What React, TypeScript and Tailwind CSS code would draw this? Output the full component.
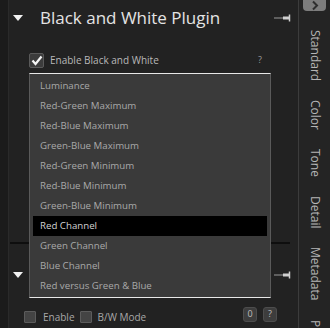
import React from 'react';

const items = [
  'Luminance',
  'Red-Green Maximum',
  'Red-Blue Maximum',
  'Green-Blue Maximum',
  'Red-Green Minimum',
  'Red-Blue Minimum',
  'Green-Blue Minimum',
  'Red Channel',
  'Green Channel',
  'Blue Channel',
  'Red versus Green & Blue',
];

const tabs = ['Standard', 'Color', 'Tone', 'Detail', 'Metadata', 'Presets'];

function Triangle() {
  return (
    <svg width="10" height="6" viewBox="0 0 10 6">
      <path d="M0 0 H10 L5 6 Z" fill="#f2f2f2" />
    </svg>
  );
}

function Pin() {
  return (
    <svg width="18" height="8" viewBox="0 0 18 8">
      <path d="M0 4 H9" stroke="#9a9a9a" strokeWidth="1" />
      <path d="M9 2.5 H15 V5.5 H9 Z" fill="#cfcfcf" />
      <path d="M15.5 0.5 V7.5" stroke="#cfcfcf" strokeWidth="1.5" />
    </svg>
  );
}

function Checkbox({ checked }: { checked?: boolean }) {
  return (
    <div
      className={
        checked
          ? 'shrink-0 w-[15px] h-[15px] rounded-[2px] border border-[#5a5a5a] bg-[#3c3c3c] flex items-center justify-center'
          : 'shrink-0 w-[12px] h-[12px] rounded-[1px] border border-[#5c5c5c] bg-[#444444]'
      }
    >
      {checked && (
        <svg width="12" height="11" viewBox="0 0 12 11">
          <path d="M1.5 5.5 L4.5 9 L10.5 1.5" stroke="#f4f4f4" strokeWidth="2.2" fill="none" />
        </svg>
      )}
    </div>
  );
}

export default function App() {
  return (
    <div
      className="w-[330px] h-[328px] flex bg-[#222222] overflow-hidden"
      style={{ fontFamily: '"Open Sans", "Noto Sans", sans-serif' }}
    >
      <div className="shrink-0 w-[9px] h-full bg-[#1b1b1b] border-r border-[#2a2a2a]" />

      <div className="relative w-[289px] shrink-0 flex flex-col">
        {/* header */}
        <div className="h-[35px] flex items-center pl-[4px] pr-[6px]">
          <Triangle />
          <span className="ml-[17px] text-[17px] leading-none text-[#e4e4e4]">
            Black and White Plugin
          </span>
          <div className="ml-auto">
            <Pin />
          </div>
        </div>

        {/* enable row */}
        <div className="mt-[17px] h-[16px] flex items-center pl-[20px] pr-[36px]">
          <Checkbox checked />
          <span className="ml-[6px] text-[10px] text-[#b8b8b8]">Enable Black and White</span>
          <span className="ml-auto text-[9px] text-[#9a9a9a]">?</span>
        </div>

        <div className="h-[176px] flex flex-col justify-end">
          <div className="h-[2px] bg-[#0e0e0e] mx-[1px] mr-[8px]" />
        </div>

        {/* second section header */}
        <div className="h-[62px] flex items-center pl-[4px] pr-[6px]">
          <Triangle />
          <div className="ml-auto">
            <Pin />
          </div>
        </div>

        {/* bottom row */}
        <div className="h-[22px] flex items-center pl-[15px] pr-[21px]">
          <Checkbox />
          <span className="ml-[7px] text-[10px] text-[#a8a8a8]">Enable</span>
          <div className="ml-[5px]">
            <Checkbox />
          </div>
          <span className="ml-[6px] text-[10px] text-[#a8a8a8]">B/W Mode</span>
          <div className="ml-auto flex gap-[6px] -mt-[6px]">
            <div className="w-[14px] h-[15px] rounded-[3px] bg-[#3d3d3d] border border-[#4d4d4d] flex items-center justify-center text-[9px] text-[#bdbdbd]">
              0
            </div>
            <div className="w-[14px] h-[15px] rounded-[3px] bg-[#3d3d3d] border border-[#4d4d4d] flex items-center justify-center text-[9px] text-[#bdbdbd]">
              ?
            </div>
          </div>
        </div>

        {/* open dropdown */}
        <div className="absolute left-[20px] top-[73px] w-[242px] h-[225px] bg-[#3a3a3a] border-t border-b border-t-[#e8e8e8] border-b-[#e8e8e8] border-x border-x-[#5a5a5a] pt-[2px] px-[3px]">
          {items.map((item) => (
            <div
              key={item}
              className={
                item === 'Red Channel'
                  ? 'h-[20px] flex items-center pl-[7px] bg-black text-[9.7px] text-[#d2d2d2]'
                  : 'h-[20px] flex items-center pl-[7px] text-[9.7px] text-[#a9a9a9]'
              }
            >
              {item}
            </div>
          ))}
        </div>
      </div>

      {/* right tab strip */}
      <div className="shrink-0 w-[32px] h-full bg-[#242424] border-l border-[#3c3c3c] flex flex-col items-center">
        <div className="w-[23px] h-[21px] rounded-b-[4px] bg-[#7d7d7d] flex items-center justify-center">
          <svg width="8" height="11" viewBox="0 0 8 11">
            <path d="M2 1.5 L6 5.5 L2 9.5" stroke="#2e2e2e" strokeWidth="2" fill="none" />
          </svg>
        </div>
        <div className="mt-[19px] flex flex-col items-center gap-[19px]">
          {tabs.map((t) => (
            <span key={t} className="[writing-mode:vertical-rl] text-[12px] text-[#b5b5b5] leading-none">
              {t}
            </span>
          ))}
        </div>
      </div>
    </div>
  );
}
